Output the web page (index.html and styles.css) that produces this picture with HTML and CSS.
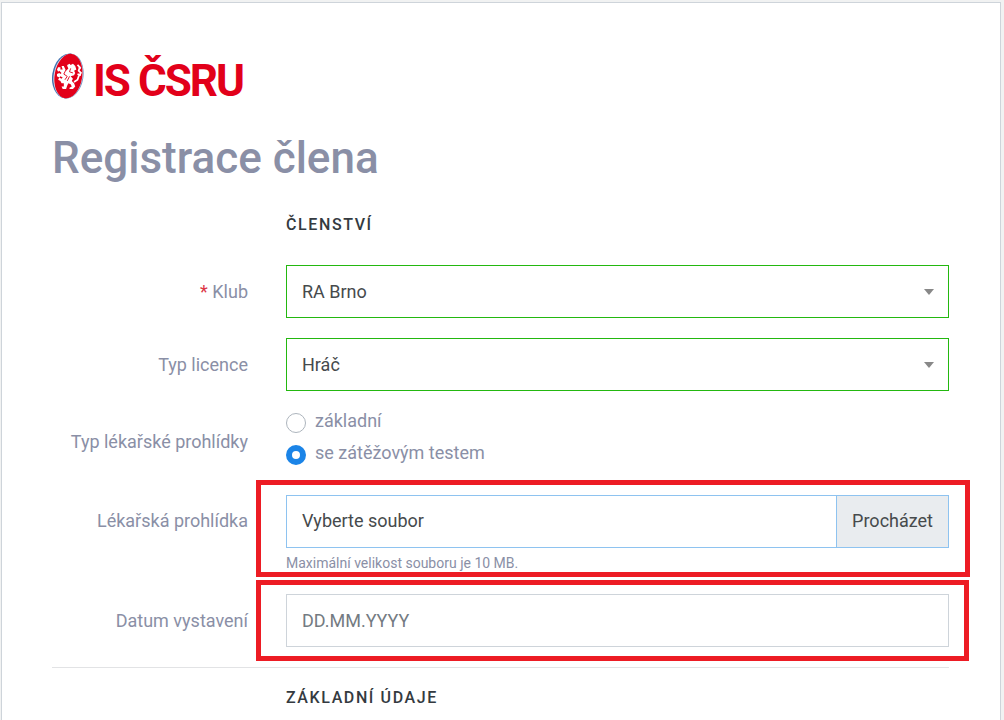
FILE: index.html
```html
<!DOCTYPE html>
<html lang="cs">
<head>
    <meta charset="UTF-8">
    <meta name="viewport" content="width=device-width, initial-scale=1.0">
    <title>IS ČSRU - Registrace člena</title>
    <link rel="stylesheet" href="styles.css">
</head>
<body>
    <main class="card">
        <a class="logo" href="#">
            <svg class="logo-ball" viewBox="0 0 34 46" aria-hidden="true">
                <g transform="rotate(9 16 23)">
                    <ellipse cx="15.4" cy="23" rx="15.2" ry="22.4" fill="#3f6fae"/>
                    <ellipse cx="16.4" cy="23" rx="15" ry="22.6" fill="#6d8fc2"/>
                    <ellipse cx="16.2" cy="23" rx="14.4" ry="22.2" fill="#e8e4ee"/>
                    <ellipse cx="16.4" cy="23" rx="13.8" ry="22.4" fill="#e2001a"/>
                </g>
                <!-- lev -->
                <g transform="translate(-3 -4) scale(1.14)">
                    <path fill="#fff" d="M16 14l2-1 1 1 2-1 2 2 1 3-2 1 1 2-1 2-3 1 2 2-1 2 2 2 1 3-2 2-3 0 0-1 2-1-1-2-2-1-1 2-1 3-3 0-1-2 2 0 0-3-2 0-1-2-2-1 1-2 2 1 1-1-2-1-1 1-2-1 0-2 2-1 1 1 1-1-2-2-1 1-1-2 1-2 2 0 0 2 2 0-1-3 2 0 1 2 1 2 2-2-1-2z"/>
                    <path fill="none" stroke="#fff" stroke-width="1.5" d="M25 14l2 2-1 3 2 2-2 3-1 3-3 2M26 16l2 1M25 22l3 1"/>
                    <path fill="none" stroke="#e2001a" stroke-width=".8" d="M15 18l-2 4 3 2-2 3M19 17l-1 3 3 1M18 24l-2 4"/>
                </g>
            </svg>
            <span>IS ČSRU</span>
        </a>
        <h1>Registrace člena</h1>

        <form class="form">
            <h2>Členství</h2>

            <div class="row">
                <label class="label" for="club"><span class="required">*</span> Klub</label>
                <div class="field select">
                    <select class="control valid" id="club">
                        <option>RA Brno</option>
                    </select>
                </div>
            </div>

            <div class="row">
                <label class="label" for="licence">Typ licence</label>
                <div class="field select">
                    <select class="control valid" id="licence">
                        <option>Hráč</option>
                    </select>
                </div>
            </div>

            <div class="row radios" role="radiogroup" aria-labelledby="exam-type">
                <span class="label" id="exam-type">Typ lékařské prohlídky</span>
                <div class="field options">
                    <label class="option"><input type="radio" name="exam"> základní</label>
                    <label class="option"><input type="radio" name="exam" checked> se zátěžovým testem</label>
                </div>
            </div>

            <div class="row file-row">
                <label class="label" for="exam-file">Lékařská prohlídka</label>
                <div class="field highlight">
                    <div class="file">
                        <input type="file" id="exam-file">
                        <span class="file-name">Vyberte soubor</span>
                        <span class="file-browse">Procházet</span>
                    </div>
                    <small class="hint">Maximální velikost souboru je 10 MB.</small>
                </div>
            </div>

            <div class="row">
                <label class="label" for="issued">Datum vystavení</label>
                <div class="field highlight">
                    <input class="control" type="text" id="issued" placeholder="DD.MM.YYYY">
                </div>
            </div>

            <hr>

            <h2>Základní údaje</h2>
        </form>
    </main>
</body>
</html>
```
FILE: styles.css
```css
:root {
    --text-color: #464a4c;
    --muted-color: #8a8fa6;
    --border-color: #ced4da;
    --valid-color: #23b80f;
    --focus-color: #8ec3f0;
    --primary-color: #1b84e7;
    --brand-color: #e2001a;
    --highlight-color: #ed1c24;
}

* {
    box-sizing: border-box;
}

body {
    display: flex;
    flex-direction: column;
    min-height: 100vh;
    margin: 0;
    padding: 2px 3px 0 1px;
    background-color: #f1f2f2;
    color: var(--text-color);
    font-family: Roboto, "Liberation Sans", sans-serif;
    font-size: 18px;
    line-height: 24px;
}

.card {
    flex: 1;
    padding: 50px 51px 0 50px;
    border: 1px solid var(--border-color);
    border-bottom: 0;
    background-color: #fff;
}

.logo {
    display: flex;
    align-items: flex-start;
    gap: 7px;
    color: var(--brand-color);
    font-size: 44px;
    font-weight: 700;
    line-height: 56px;
    letter-spacing: -2px;
    text-decoration: none;
}

.logo-ball {
    width: 34px;
    height: 46px;
}

h1 {
    margin: 22px 0 28px;
    color: var(--muted-color);
    font-size: 44px;
    font-weight: 500;
    line-height: 54px;
}

h2 {
    margin: 0 0 28px 234px;
    color: #343a40;
    font-size: 16px;
    font-weight: 500;
    line-height: 24px;
    letter-spacing: 0.1em;
    text-transform: uppercase;
}

h2:last-child {
    margin-bottom: 0;
}

.row {
    display: grid;
    grid-template-columns: 196px 1fr;
    gap: 38px;
    align-items: center;
    margin-bottom: 20px;
}

.label {
    color: var(--muted-color);
    text-align: right;
}

.required {
    color: #dc3545;
}

.field {
    position: relative;
}

.control {
    display: block;
    width: 100%;
    height: 53px;
    padding: 0 15px;
    border: 1px solid var(--border-color);
    border-radius: 0;
    background-color: #fff;
    color: var(--text-color);
    font: inherit;
    appearance: none;
}

.control::placeholder {
    color: #747b82;
    opacity: 1;
}

.valid {
    border-color: var(--valid-color);
}

.select::after {
    content: "";
    position: absolute;
    top: 24px;
    right: 15px;
    border: 5px solid transparent;
    border-top: 6px solid #888;
    border-bottom: 0;
    pointer-events: none;
}

.radios {
    margin-top: -2px;
}

.options {
    display: grid;
    gap: 8px;
    padding-bottom: 10px;
}

.option {
    display: flex;
    align-items: center;
    gap: 9px;
    color: var(--muted-color);
}

.option input {
    width: 20px;
    height: 20px;
    margin: 4px 0 0;
    border: 1px solid #adb5bd;
    border-radius: 50%;
    background-color: #fff;
    appearance: none;
}

.option input:checked {
    border: 6px solid var(--primary-color);
}

.file-row {
    align-items: start;
}

.file-row .label {
    padding-top: 14px;
}

.file {
    position: relative;
    display: flex;
    height: 53px;
    border: 1px solid var(--focus-color);
    line-height: 50px;
}

/* nativní prvek leží průhledný přes celé pole */
.file input {
    position: absolute;
    inset: 0;
    width: 100%;
    height: 100%;
    opacity: 0;
}

.file-name {
    flex: 1;
    padding: 0 15px;
}

.file-browse {
    padding: 0 15px;
    border-left: 1px solid var(--focus-color);
    background-color: #e9ecef;
}

.hint {
    display: block;
    margin-top: 4px;
    color: var(--muted-color);
    font-size: 14px;
    line-height: 22px;
}

.highlight::after {
    content: "";
    position: absolute;
    inset: -14px -20px -14px -30px;
    border: 5px solid var(--highlight-color);
    pointer-events: none;
}

.file-row .highlight::after {
    inset: -15px -21px -3px -30px;
}

hr {
    margin: 20px 0 18px;
    border: 0;
    border-top: 1px solid #e2e3e5;
}
```
